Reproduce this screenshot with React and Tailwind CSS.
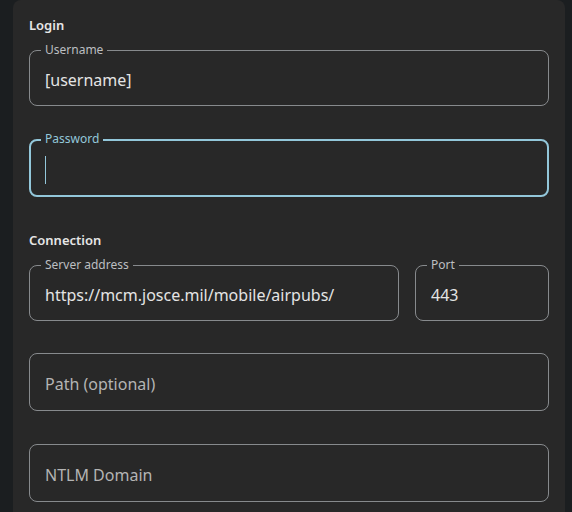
import React from 'react';

const FONT = { fontFamily: '"Noto Sans", "Open Sans", sans-serif' };

function Field({ label, value, placeholder, focused, className = '' }) {
  return (
    <div
      className={`relative h-14 rounded-lg flex items-center ${
        focused ? 'border-2 border-[#93c7da] px-[14px]' : 'border border-[#878a8d] px-[15px]'
      } ${className}`}
    >
      {label && (
        <span
          className={`absolute px-1 bg-[#282828] text-[12px] leading-4 ${
            focused ? '-top-[10px] left-[10px] text-[#93c7da]' : '-top-[9px] left-[11px] text-[#bcbfc1]'
          }`}
        >
          {label}
        </span>
      )}
      {focused && <span className="w-px h-7 bg-[#93c7da] mt-1" />}
      {value && <span className="text-[16px] text-[#e4e4e4] pt-[3px]">{value}</span>}
      {placeholder && <span className="text-[16px] text-[#b4b4b4] pt-[3px]">{placeholder}</span>}
    </div>
  );
}

export default function App() {
  return (
    <div className="w-[572px] h-[512px] overflow-hidden bg-[#1b1e20] pl-[13px] pr-[7px]" style={FONT}>
      <div className="bg-[#282828] rounded-t-lg h-[540px] pl-4 pr-4 pt-[15px]">
        <h2 className="text-[13px] font-semibold text-[#e6e6e6] leading-5">Login</h2>
        <Field className="mt-[15px]" label="Username" value="[username]" />
        <Field className="mt-[33px] h-[58px]" label="Password" focused />
        <h2 className="text-[13px] font-semibold text-[#e6e6e6] leading-5 mt-[33px]">Connection</h2>
        <div className="flex gap-4 mt-[15px]">
          <Field className="flex-1" label="Server address" value="https://mcm.josce.mil/mobile/airpubs/" />
          <Field className="w-[134px]" label="Port" value="443" />
        </div>
        <Field className="mt-[32px] h-[58px]" placeholder="Path (optional)" />
        <Field className="mt-[33px] h-[58px]" placeholder="NTLM Domain" />
      </div>
    </div>
  );
}
